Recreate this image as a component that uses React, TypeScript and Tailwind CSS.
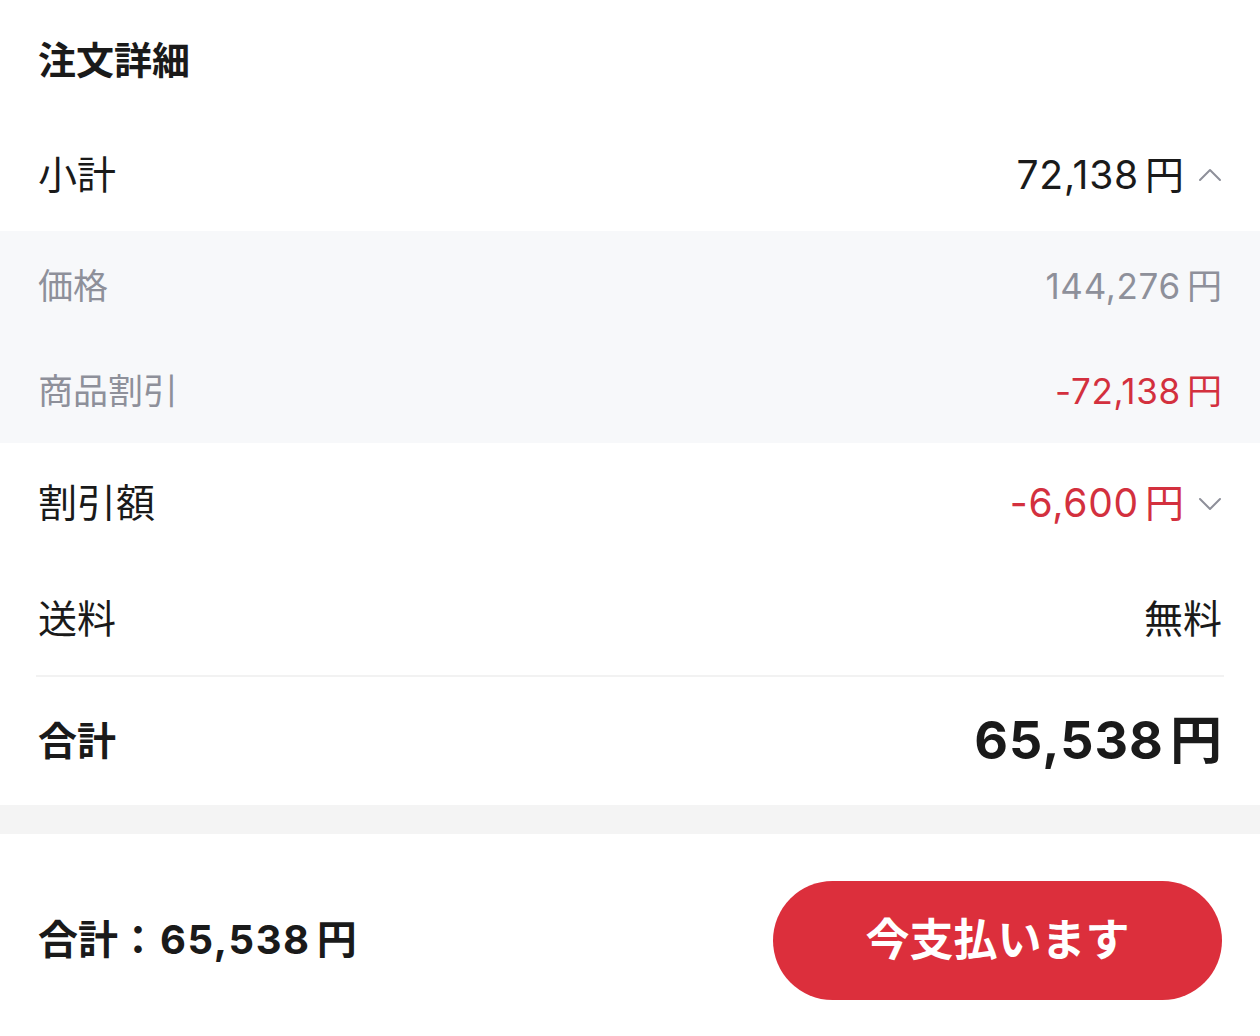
import React from "react";

const font = {
	fontFamily: '"Inter", "Noto Sans CJK JP", sans-serif',
};

const Chevron: React.FC<{ up?: boolean }> = ({ up }) => (
	<svg
		width="24"
		height="24"
		viewBox="0 0 24 24"
		fill="none"
		stroke="#8e909a"
		strokeWidth="2"
		strokeLinecap="round"
		strokeLinejoin="round"
		className="ml-[14px]"
	>
		{up ? <path d="M2 16l10-10 10 10" /> : <path d="M2 8l10 10 10-10" />}
	</svg>
);

// digits + 円 with a little breathing room, like the reference
const Yen: React.FC<{ v: string }> = ({ v }) => (
	<span className="flex items-center">
		<span className="tracking-[0.02em]">{v}</span>
		<span className="ml-[6px]">円</span>
	</span>
);

export default function App() {
	return (
		<div className="w-[1260px] h-[1036px] bg-white text-[#1a1a1a] flex flex-col" style={font}>
			<div className="h-[120px] px-[38px] flex items-center">
				<h1 className="text-[38px] font-bold leading-none">注文詳細</h1>
			</div>

			<div className="h-[111px] px-[38px] flex items-center justify-between text-[39px]">
				<span>小計</span>
				<span className="flex items-center">
					<Yen v="72,138" />
					<Chevron up />
				</span>
			</div>

			<div className="bg-[#f7f8fa] text-[#8e909a] text-[35px]">
				<div className="h-[108px] pt-[2px] px-[38px] flex items-center justify-between">
					<span>価格</span>
					<Yen v="144,276" />
				</div>
				<div className="h-[104px] px-[38px] flex items-center justify-between">
					<span>商品割引</span>
					<span className="text-[#d3303e]">
						<Yen v="-72,138" />
					</span>
				</div>
			</div>

			<div className="h-[120px] px-[38px] flex items-center justify-between text-[39px]">
				<span>割引額</span>
				<span className="flex items-center text-[#d3303e]">
					<Yen v="-6,600" />
					<Chevron />
				</span>
			</div>

			<div className="h-[112px] px-[38px] flex items-center justify-between text-[39px]">
				<span>送料</span>
				<span>無料</span>
			</div>

			<div className="mx-[36px] h-[2px] bg-[#f2f2f2]" />

			<div className="h-[128px] px-[38px] flex items-center justify-between">
				<span className="text-[39px] font-bold">合計</span>
				<span className="text-[52px] font-bold">
					<Yen v="65,538" />
				</span>
			</div>

			<div className="h-[29px] bg-[#f4f4f4]" />

			<div className="flex-1 px-[38px] pt-[10px] flex items-center justify-between">
				<span className="flex items-center text-[40px] font-bold">
					<span>合計：</span>
					<span className="ml-[2px] tracking-[0.04em]">65,538</span>
					<span className="ml-[6px]">円</span>
				</span>
				<button className="w-[449px] h-[119px] rounded-full bg-[#dc2f3c] text-white text-[44px] font-bold">
					今支払います
				</button>
			</div>
		</div>
	);
}
